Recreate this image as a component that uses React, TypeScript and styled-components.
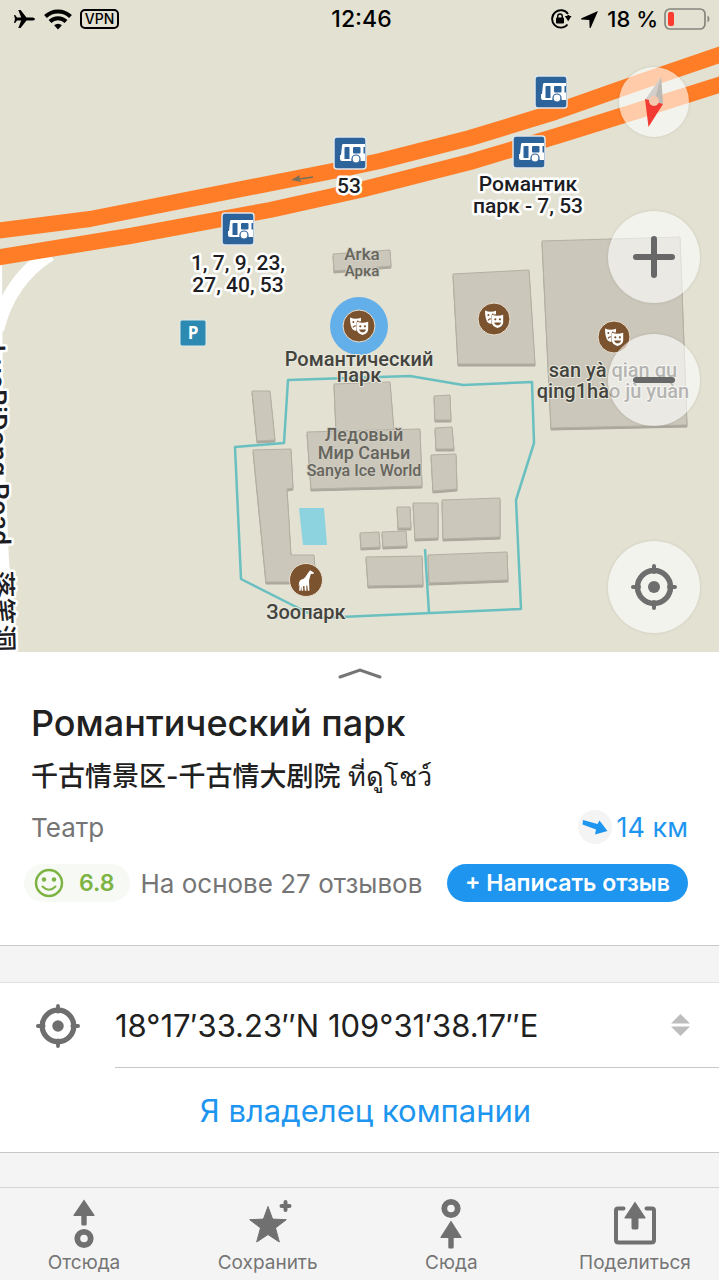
import React from 'react';
import styled, { createGlobalStyle } from 'styled-components';

const GlobalStyle = createGlobalStyle`
  *, *::before, *::after { box-sizing: border-box; }
  body { margin: 0; background: #f4f4f4; }
  h1, h2, p { margin: 0; font-weight: inherit; }
  button { border: 0; padding: 0; margin: 0; background: none; font: inherit; color: inherit; cursor: pointer; }
  a { text-decoration: none; }
  svg { display: block; flex: none; }
`;

const Page = styled.div`
  display: flex;
  flex-direction: column;
  min-height: 100vh;
  font-family: Inter, 'Noto Sans CJK SC', sans-serif;
  color: #212121;
`;

/* ---------- map ---------- */

const MapArea = styled.section`
  position: relative;
  flex: 1;
  min-height: 600px;
  display: flex;
  flex-direction: column;
  background: #e2e1d2;
  overflow: hidden;
`;

const MapCanvas = styled.svg`
  position: absolute;
  inset: 0;
  width: 100%;
  height: 100%;
  font-family: Roboto, 'Noto Sans CJK SC', sans-serif;
  font-weight: 500;
`;

const StatusBar = styled.header`
  position: relative;
  display: grid;
  grid-template-columns: 1fr auto 1fr;
  align-items: center;
  height: 38px;
  padding: 0 9px 0 13px;
  color: #000;
  font-size: 22px;
  font-weight: 500;
`;

const Clock = styled.time`
  font-size: 23px;
`;

const StatusGroup = styled.div<{ $end?: boolean }>`
  display: flex;
  align-items: center;
  justify-content: ${(p) => (p.$end ? 'flex-end' : 'flex-start')};
  gap: ${(p) => (p.$end ? 6 : 8)}px;
  white-space: nowrap;
`;

const VpnBadge = styled.span`
  display: flex;
  align-items: center;
  justify-content: center;
  width: 39px;
  height: 20px;
  border: 2px solid #000;
  border-radius: 5px;
  font-size: 14px;
  line-height: 16px;
`;

const Controls = styled.div`
  position: relative;
  flex: 1;
  align-self: flex-end;
  display: flex;
  flex-direction: column;
  align-items: center;
  padding: 29px 19px 19px 0;
`;

const RoundButton = styled.button<{ $size: number; $gap?: string; $alpha?: number }>`
  display: flex;
  align-items: center;
  justify-content: center;
  width: ${(p) => p.$size}px;
  height: ${(p) => p.$size}px;
  margin-top: ${(p) => p.$gap ?? '0'};
  border-radius: 50%;
  background: rgba(255, 255, 255, ${(p) => p.$alpha ?? 0.6});
  box-shadow: 0 0 3px rgba(0, 0, 0, 0.12);
  color: #6b6b6b;
`;

/* ---------- place card ---------- */

const Card = styled.section`
  display: flex;
  flex-direction: column;
  padding-bottom: 43px;
  background: #fff;
  border-bottom: 1px solid #c8c8c8;
`;

const Grabber = styled.button`
  display: flex;
  align-items: center;
  justify-content: center;
  height: 44px;
`;

const Title = styled.h1`
  padding: 0 31px;
  font-size: 36px;
  line-height: 54px;
  font-weight: 500;
`;

const Subtitle = styled.h2`
  padding: 0 31px;
  font-size: 27px;
  line-height: 54px;
  font-weight: 500;
`;

const CardRow = styled.div<{ $review?: boolean }>`
  display: flex;
  align-items: center;
  height: ${(p) => (p.$review ? 38 : 46)}px;
  margin-top: ${(p) => (p.$review ? 14 : 0)}px;
  padding: 0 31px 0 ${(p) => (p.$review ? 24 : 31)}px;
  white-space: nowrap;
`;

const Muted = styled.span`
  color: #757575;
  font-size: 26px;
`;

const Distance = styled.span`
  display: flex;
  align-items: center;
  gap: 5px;
  margin-left: auto;
  color: #1e96f0;
  font-size: 27px;
`;

const Rating = styled.span`
  display: flex;
  align-items: center;
  gap: 15px;
  height: 38px;
  margin-right: 10px;
  padding: 0 16px 0 10px;
  border-radius: 19px;
  background: #f7f9f5;
  color: #7cb342;
  font-size: 23px;
  font-weight: 600;
`;

const ReviewButton = styled.button`
  height: 38px;
  margin-left: auto;
  padding: 0 18px;
  border-radius: 19px;
  background: #1e96f0;
  color: #fff;
  font-size: 23px;
  font-weight: 600;
`;

/* ---------- details ---------- */

const Details = styled.section`
  margin-top: 36px;
  background: #fff;
  border-top: 1px solid #e0e0e0;
  border-bottom: 1px solid #c8c8c8;
`;

const CoordRow = styled.button`
  display: flex;
  align-items: stretch;
  width: 100%;
  height: 85px;
  text-align: left;
  font-size: 31px;
`;

const CoordIcon = styled.span`
  display: flex;
  align-items: center;
  justify-content: center;
  width: 115px;
`;

const CoordBody = styled.span`
  flex: 1;
  display: flex;
  align-items: center;
  justify-content: space-between;
  padding-right: 29px;
  border-bottom: 1px solid #c8c8c8;
`;

const OwnerLink = styled.a`
  display: flex;
  align-items: center;
  justify-content: center;
  height: 84px;
  padding-left: 12px;
  color: #1e96f0;
  font-size: 31px;
`;

const TabBar = styled.nav`
  display: flex;
  justify-content: space-between;
  margin-top: 34px;
  padding: 0 24px;
  height: 93px;
  border-top: 1px solid #d4d4d4;
  background: #f4f4f4;
`;

const Tab = styled.button`
  display: flex;
  flex-direction: column;
  align-items: center;
  justify-content: flex-start;
  width: 120px;
  padding-top: 8px;
  gap: 1px;
  color: #757575;
  font-size: 19px;
  line-height: 24px;
  white-space: nowrap;
`;

/* ---------- map drawing ---------- */

const buildings = [
  '333,254 390,250 391,266 334,271',
  '453,274 529,270 535,364 458,364',
  '542,241 680,237 687,425 551,428',
  '252,391 270,391 275,440 257,441',
  '334,384 390,382 394,431 336,431',
  '307,432 420,429 422,486 311,489',
  '434,396 450,395 451,420 435,420',
  '435,428 452,427 454,449 436,449',
  '431,455 456,454 457,489 433,491',
  '253,450 291,449 293,488 287,489 291,555 314,555 316,582 266,582',
  '397,507 410,507 411,528 398,528',
  '413,503 438,503 438,538 415,539',
  '442,500 500,498 500,537 443,539',
  '360,533 379,532 380,547 361,548',
  '382,532 406,531 407,546 383,547',
  '366,557 422,556 423,585 368,586',
  '428,555 507,552 508,580 429,583',
];

const BusPin = ({ x, y }: { x: number; y: number }) => (
  <g transform={`translate(${x - 16} ${y - 16})`}>
    <rect x="0" y="0" width="32" height="32" rx="3" fill="#2d639b" stroke="#dfe6ea" strokeWidth="1.500" />
    <path
      d="M9 7h22v17h-4.500a4.500 4.500 0 0 0-9 0H8a2 2 0 0 1-2-2v-4h1l1-9.500Q8 7 9 7z"
      fill="#fff"
    />
    <path d="M11.500 10h4v12h-5v-11q0-1 1-1z" fill="#2d639b" />
    <rect x="19" y="10" width="7.500" height="6.500" rx="1" fill="#2d639b" />
    <path d="M31 10h-1.500v6.500H31z" fill="#2d639b" />
    <circle cx="22" cy="22" r="4" fill="#fff" stroke="#2d639b" strokeWidth="1.200" />
  </g>
);

const TheatrePin = ({ x, y }: { x: number; y: number }) => (
  <g transform={`translate(${x} ${y})`}>
    <circle r="16" fill="#7b532f" stroke="#eadfd0" />
    <path d="M-9-8.500q5.500 2.200 11 .3v3.500q-4.500.2-4.500 1v8.500C-7 5.500-9-.5-9-8.500z" fill="#fff" />
    <circle cx="-5.600" cy="-4" r="1" fill="#7b532f" />
    <circle cx="-1.200" cy="-4.500" r=".9" fill="#7b532f" />
    <path d="M-6 1.500q1-1.800 2.800-1.600" fill="none" stroke="#7b532f" strokeWidth="1.100" />
    <path d="M-2.200-4.200q5.700 2 11.400 0v7.500q0 4-5.600 5.600-5.800-1.600-5.800-5.600z" fill="#fff" />
    <circle cx="1.300" cy=".3" r="1.100" fill="#7b532f" />
    <circle cx="5.900" cy=".3" r="1.100" fill="#7b532f" />
    <path d="M.2 3.400h6.800q-.6 2.800-3.400 2.800T.2 3.400z" fill="#7b532f" />
  </g>
);

type LabelProps = { x: number; y: number; size?: number; tone?: string; halo?: string; children: string };

const Label = ({ x, y, size = 20, tone = '#44443f', halo = '#e9e8dc', children }: LabelProps) => (
  <text
    x={x}
    y={y}
    fontSize={size}
    fill={tone}
    stroke={halo}
    strokeWidth={halo === '#fff' ? 5 : 2}
    strokeLinejoin="round"
    paintOrder="stroke"
    textAnchor="middle"
  >
    {children}
  </text>
);

const MapDrawing = () => (
  <MapCanvas viewBox="0 0 719 652" preserveAspectRatio="xMidYMid slice" role="img" aria-label="Карта">
    <path d="M0 255H2L3 420 9 560 17 652H0z" fill="#fff" />
    <path d="M50 254C28 268 6 292-3 330" fill="none" stroke="#fff" strokeWidth="14" />
    {buildings.map((points) => (
      <g key={points} strokeLinejoin="round">
        <polygon points={points} fill="#aaa79c" stroke="#aaa79c" transform="translate(0 2)" />
        <polygon points={points} fill="#cbc7bb" stroke="#b3afa3" />
      </g>
    ))}
    <polygon points="299,508 324,508 327,545 303,545" fill="#8cd2df" />
    <path
      d="M288 380 410 376 463 385 532 382 534 443 516 500 521 609 318 618 241 579 235 447 284 443zM425 549 429 613"
      fill="none"
      stroke="#6ac0c0"
      strokeWidth="2.500"
      strokeLinejoin="round"
    />
    <g fill="none" stroke="#ff7d27" strokeWidth="16" strokeLinejoin="round">
      <path d="M-5 231 90 219 333 171 380 161 470 138 555 112 640 82 725 53" />
      <path d="M-5 258 130 236 270 210 360 190 470 162 560 135 640 110 725 83" />
    </g>
    <path d="M313 177 299 179" stroke="#75705c" strokeWidth="1.500" />
    <path d="M291 180l9-5-1 4 3 3z" fill="#75705c" />

    <circle cx="359" cy="326" r="29" fill="#63afe9" />
    <BusPin x={551} y={92} />
    <BusPin x={350} y={153} />
    <BusPin x={529} y={152} />
    <BusPin x={238} y={229} />
    <TheatrePin x={359} y={326} />
    <TheatrePin x={494} y={319} />
    <TheatrePin x={614} y={337} />

    <rect x="180" y="320" width="26" height="26" rx="2" fill="#2b89b2" stroke="#dcebea" />
    <text x="193" y="339" fontFamily="'Open Sans', sans-serif" fontSize="17" fontWeight="700" fill="#fff" textAnchor="middle">
      P
    </text>

    <circle cx="306" cy="580" r="16.500" fill="#7b532f" stroke="#eadfd0" />
    <path
      d="M309.500 571l1-.7.700.800 2.600 1.300v1.400l-3 .2-1.800 6.500.4 10.200h-1.600l-.5-5.200-1 .1.100 5.100h-1.600l-.4-4.700h-1.300l.1 4.700h-1.600l-.3-4.500-.7 4.500h-1.400l.3-6.500-.8 2.300.3-3.500c.3-2.400 1.700-3.600 4.200-4 2-1.200 4-5 6.300-8z"
      fill="#fff"
    />

    <Label x={349} y={193} size={21} tone="#1d1d24" halo="#fff">53</Label>
    <Label x={528} y={191} size={21} tone="#1d1d24" halo="#fff">Романтик</Label>
    <Label x={528} y={213} size={21} tone="#1d1d24" halo="#fff">парк - 7, 53</Label>
    <Label x={238} y={270} size={21} tone="#1d1d24" halo="#fff">1, 7, 9, 23,</Label>
    <Label x={238} y={292} size={21} tone="#1d1d24" halo="#fff">27, 40, 53</Label>
    <Label x={362} y={260} size={17} tone="#66655d" halo="#d2cfc4">Arka</Label>
    <Label x={362} y={276} size={15} tone="#66655d" halo="#d2cfc4">Арка</Label>
    <Label x={359} y={366}>Романтический</Label>
    <Label x={359} y={382}>парк</Label>
    <Label x={613} y={377}>san yà qian gu</Label>
    <Label x={613} y={398}>qing1hào jù yuàn</Label>
    <Label x={364} y={441} size={18} tone="#66655d" halo="#cfccc1">Ледовый</Label>
    <Label x={364} y={459} size={18} tone="#66655d" halo="#cfccc1">Мир Саньи</Label>
    <Label x={364} y={476} size={16} tone="#66655d" halo="#cfccc1">Sanya Ice World</Label>
    <Label x={306} y={619}>Зоопарк</Label>
    <text
      transform="translate(-14 345) rotate(88.500)"
      fontSize="27"
      fill="#1d1d24"
      stroke="#fff"
      strokeWidth="5"
      strokeLinejoin="round"
      paintOrder="stroke"
    >
      LuoBiDong Road
      <tspan x="226">落笔洞</tspan>
    </text>
  </MapCanvas>
);

/* ---------- icons ---------- */

const TargetIcon = ({ size = 46 }: { size?: number }) => (
  <svg width={size} height={size} viewBox="0 0 46 46" fill="none" stroke="#6e6e6e">
    <circle cx="23" cy="23" r="16.500" strokeWidth="5.500" />
    <circle cx="23" cy="23" r="6" fill="#6e6e6e" stroke="none" />
    <path d="M23 2v6M23 38v6M2 23h6M38 23h6" strokeWidth="4" strokeLinecap="round" />
  </svg>
);

const RouteFromIcon = () => (
  <svg width="50" height="54" viewBox="0 0 50 54" fill="#707070">
    <path d="M25 3.500 35.500 19q.5 1-.5 1H27.700v8q0 1.500-1.200 1.500h-3q-1.200 0-1.200-1.500v-8H15q-1 0-.5-1z" />
    <circle cx="25" cy="42.500" r="6.700" fill="none" stroke="#707070" strokeWidth="5.800" />
  </svg>
);

const SaveIcon = () => (
  <svg width="50" height="54" viewBox="0 0 50 54" fill="#707070" stroke="#707070" strokeLinejoin="round">
    <path d="M25 10.500l4.600 12.600 13.700.6-10.800 8.200 3.800 14.100L25 38.600 13.700 46l3.800-14.100-10.800-8.200 13.700-.6z" />
    <path d="M42.500 6v8M38.500 10h8" strokeWidth="4" strokeLinecap="round" />
  </svg>
);

const RouteToIcon = () => (
  <svg width="50" height="54" viewBox="0 0 50 54" fill="#707070">
    <circle cx="25" cy="12.500" r="6.700" fill="none" stroke="#707070" strokeWidth="5.800" />
    <path d="M25 24.500 35.500 41q.5 1-.5 1H27.700v9q0 1.500-1.200 1.500h-3q-1.200 0-1.200-1.500v-9H15q-1 0-.5-1z" />
  </svg>
);

const ShareIcon = () => (
  <svg width="50" height="54" viewBox="0 0 50 54" fill="#707070">
    <path
      d="M13.500 12.500H8q-2 0-2 2V44q0 2.500 2.500 2.500h33Q44 46.500 44 44V14.500q0-2-2-2h-5.500"
      fill="none"
      stroke="#707070"
      strokeWidth="4"
      strokeLinecap="round"
    />
    <path d="M25 5.500 35.500 21.500q.5 1-.5 1H28.500v9q0 2-1.500 2h-4q-1.500 0-1.500-2v-9H15q-1 0-.5-1z" />
  </svg>
);

const tabs = [
  { label: 'Отсюда', Icon: RouteFromIcon },
  { label: 'Сохранить', Icon: SaveIcon },
  { label: 'Сюда', Icon: RouteToIcon },
  { label: 'Поделиться', Icon: ShareIcon },
];

export default function App() {
  return (
    <Page>
      <GlobalStyle />
      <MapArea>
        <MapDrawing />
        <StatusBar>
          <StatusGroup>
            <svg width="23" height="20" viewBox="0 0 23 20">
              <path
                d="M22 10c0 1-1.600 1.600-3.500 1.600h-5L7.600 19H5.300l2.900-7.400H4L2.200 14H1l1-4-1-4h1.200L4 8.400h4.200L5.300 1h2.300l5.900 7.400h5C20.400 8.400 22 9 22 10z"
              />
            </svg>
            <svg width="28" height="21" viewBox="0 0 28 21" fill="none" stroke="#000" strokeWidth="4">
              <path d="M1.500 7.500a18 18 0 0 1 25 0" />
              <path d="M6 12.500a11.500 11.500 0 0 1 16 0" />
              <path d="M14 20.500l-3.900-4.200a5.800 5.800 0 0 1 7.800 0z" fill="#000" stroke="none" />
            </svg>
            <VpnBadge>VPN</VpnBadge>
          </StatusGroup>
          <Clock>12:46</Clock>
          <StatusGroup $end>
            <svg width="22" height="20" viewBox="0 0 22 20" fill="none">
              <path d="M18 5A8.700 8.700 0 1 0 17.500 15.500M18.400 9V6" stroke="#000" strokeWidth="1.900" />
              <path d="M14.800 7h6.700l-3.300 5.300z" fill="#000" />
              <rect x="6" y="8.500" width="8" height="6" rx="1" fill="#000" />
              <path d="M7.700 9V7.300a2.300 2.300 0 0 1 4.600 0V9" stroke="#000" strokeWidth="1.400" />
            </svg>
            <svg width="23" height="20" viewBox="0 0 23 20">
              <path d="M20 2 12.800 18.500q-.8 1-1.200 0L11.300 11 3.500 10.500q-1.200-.5 0-1.200z" />
            </svg>
            <span>18 %</span>
            <svg width="46" height="22" viewBox="0 0 46 22" fill="none">
              <rect x="1" y="1" width="40" height="20" rx="5" stroke="#85857d" strokeWidth="1.700" />
              <rect x="4" y="4" width="6" height="14" rx="2" fill="#fb3b30" />
              <path d="M43.500 7.500q2 1 2 3.500t-2 3.500z" fill="#85857d" />
            </svg>
          </StatusGroup>
        </StatusBar>
        <Controls>
          <RoundButton $size={70} aria-label="Компас">
            <svg width="70" height="70" viewBox="0 0 70 70">
              <path d="M42 10 26 33 44 37z" fill="#d3cec8" />
              <path d="M42 10 35 35 44 37z" fill="#bdb9b3" />
              <path d="M26 32 44 37 29.500 60z" fill="#f23b32" />
              <circle cx="35" cy="34" r="5" fill="#f5c9ae" />
            </svg>
          </RoundButton>
          <RoundButton $size={92} $gap="74px" aria-label="Приблизить">
            <svg width="44" height="44" viewBox="0 0 44 44" stroke="#686868" strokeWidth="6" strokeLinecap="round">
              <path d="M22 4v36M4 22h36" />
            </svg>
          </RoundButton>
          <RoundButton $size={92} $gap="31px" aria-label="Отдалить">
            <svg width="44" height="44" viewBox="0 0 44 44" stroke="#686868" strokeWidth="6" strokeLinecap="round">
              <path d="M4 22h36" />
            </svg>
          </RoundButton>
          <RoundButton $size={92} $gap="auto" aria-label="Моё местоположение">
            <TargetIcon />
          </RoundButton>
        </Controls>
      </MapArea>

      <Card>
        <Grabber aria-label="Развернуть">
          <svg width="46" height="14" viewBox="0 0 46 14" fill="none" stroke="#757575" strokeWidth="3" strokeLinecap="round">
            <path d="M3 10 23 3 43 10" />
          </svg>
        </Grabber>
        <Title>Романтический парк</Title>
        <Subtitle>千古情景区-千古情大剧院 ที่ดูโชว์</Subtitle>
        <CardRow>
          <Muted>Театр</Muted>
          <Distance>
            <svg width="34" height="34" viewBox="0 0 34 34">
              <circle cx="17" cy="17" r="17" fill="#f4f4f4" />
              <path d="M5 10 19.500 14 21.500 10.500 29.500 21 17 24.500 18 19.500 4.500 14.500z" fill="#1e96f0" />
            </svg>
            14 км
          </Distance>
        </CardRow>
        <CardRow $review>
          <Rating>
            <svg width="30" height="30" viewBox="0 0 30 30" fill="none" stroke="#7cb342" strokeWidth="2.500">
              <circle cx="15" cy="15" r="13" />
              <circle cx="10" cy="11.500" r="2.200" fill="#7cb342" stroke="none" />
              <circle cx="20" cy="11.500" r="2.200" fill="#7cb342" stroke="none" />
              <path d="M8.500 18.500q6.500 6.500 13 0" strokeLinecap="round" strokeWidth="2" />
            </svg>
            6.8
          </Rating>
          <Muted>На основе 27 отзывов</Muted>
          <ReviewButton>+ Написать отзыв</ReviewButton>
        </CardRow>
      </Card>

      <Details>
        <CoordRow>
          <CoordIcon>
            <TargetIcon size={44} />
          </CoordIcon>
          <CoordBody>
            18°17′33.23″N 109°31′38.17″E
            <svg width="19" height="24" viewBox="0 0 19 24" fill="#bdbdbd">
              <path d="M9.500 1 19 10.500H0zM9.500 23 19 13.500H0z" />
            </svg>
          </CoordBody>
        </CoordRow>
        <OwnerLink href="#owner">Я владелец компании</OwnerLink>
      </Details>

      <TabBar>
        {tabs.map(({ label, Icon }) => (
          <Tab key={label}>
            <Icon />
            {label}
          </Tab>
        ))}
      </TabBar>
    </Page>
  );
}
